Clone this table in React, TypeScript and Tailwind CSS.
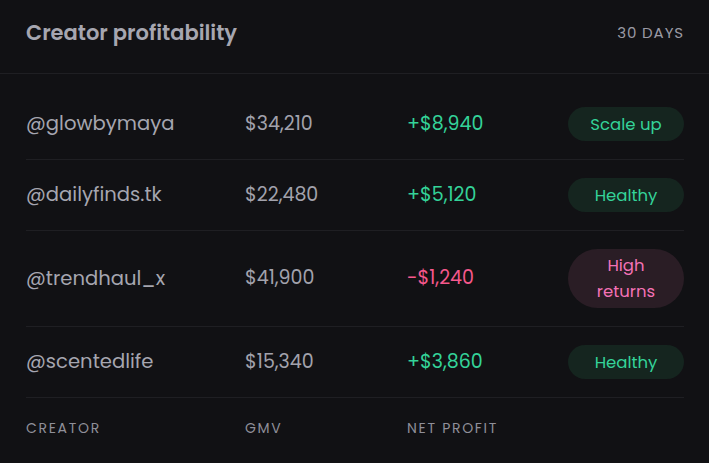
const rows = [
  { handle: "@glowbymaya", gmv: "$34,210", profit: "+$8,940", status: "Scale up", tone: "good" },
  { handle: "@dailyfinds.tk", gmv: "$22,480", profit: "+$5,120", status: "Healthy", tone: "good" },
  { handle: "@trendhaul_x", gmv: "$41,900", profit: "-$1,240", status: "High returns", tone: "bad" },
  { handle: "@scentedlife", gmv: "$15,340", profit: "+$3,860", status: "Healthy", tone: "good" },
];

export default function App() {
  return (
    <div
      className="h-[463px] w-[709px] overflow-hidden bg-[#111114]"
      style={{ fontFamily: '"Poppins", "Noto Sans", sans-serif' }}
    >
      {/* Header */}
      <div className="flex h-[74px] items-center justify-between border-b border-[#1f1f23] pl-[26px] pr-[25px] pb-[7px]">
        <h2 className="text-[21px] font-semibold text-[#a6a6b0]">Creator profitability</h2>
        <span className="text-[15px] tracking-[0.9px] text-[#9a9aa4]">30 DAYS</span>
      </div>

      {/* Rows */}
      <div className="pl-[26px] pr-[25px] pt-[15px]">
        {rows.map((row) => (
          <div
            key={row.handle}
            className="grid grid-cols-[219px_162px_1fr_116px] items-center border-b border-[#1f1f23] py-[18px]"
          >
            <span className="text-[19.6px] text-[#a6a6b0]">{row.handle}</span>
            <span className="text-[19px] text-[#a2a2ac]">{row.gmv}</span>
            <span
              className={
                row.tone === "good"
                  ? "text-[19px] text-[#34d399]"
                  : "text-[19px] text-[#f5588c]"
              }
            >
              {row.profit}
            </span>
            <span
              className={
                row.tone === "good"
                  ? "flex min-h-[34px] items-center justify-center rounded-full bg-[#15251f] px-4 text-center text-[16.5px] leading-[25px] text-[#34d399]"
                  : "flex min-h-[34px] items-center justify-center rounded-full bg-[#2a1d25] px-7 py-1 text-center text-[16.5px] leading-[25.5px] text-[#f472b6]"
              }
            >
              {row.status}
            </span>
          </div>
        ))}

        {/* Column labels */}
        <div className="grid grid-cols-[219px_162px_1fr_116px] items-center pt-[20px] text-[14px] tracking-[1.7px] text-[#8f8f99]">
          <span>CREATOR</span>
          <span>GMV</span>
          <span>NET PROFIT</span>
          <span />
        </div>
      </div>
    </div>
  );
}
